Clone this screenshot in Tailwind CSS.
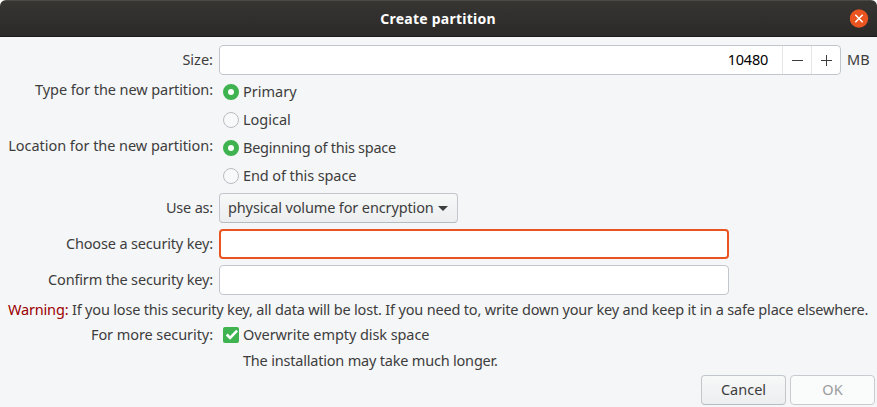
<!DOCTYPE html>
<html lang="en">
<head>
<meta charset="utf-8">
<title>Create partition</title>
<script src="https://cdn.jsdelivr.net/npm/@tailwindcss/browser@4"></script>
</head>
<body class="w-[877px] h-[407px] overflow-hidden bg-white font-['Noto_Sans','Open_Sans',sans-serif] text-[14.5px] leading-5 text-[#3d3d3d] whitespace-nowrap">
<div class="flex h-full flex-col rounded-t-[6px] overflow-hidden bg-[#f5f6f7]">
  <header class="grid h-[37px] shrink-0 grid-cols-[1fr_auto_1fr] items-center border-t border-b border-t-[#4b4a46] border-b-[#1d1c1b] bg-linear-to-b from-[#373532] to-[#2c2a29] pr-[8px]">
    <span></span>
    <h1 class="pl-[7px] text-[14px] font-bold text-white tracking-[0.24px]">Create partition</h1>
    <svg class="justify-self-end" width="19" height="19" viewBox="0 0 19 19"><circle cx="9" cy="9.5" r="9.2" fill="#e95420"/><path d="M5.3 5.8l7.4 7.4M12.7 5.8l-7.4 7.4" stroke="#fff" stroke-width="1.5"/></svg>
  </header>
  <main class="flex flex-col pt-2">
    <div class="flex h-[30px] items-center">
      <label class="w-[213px] pb-[2px] text-right">Size:</label>
      <div class="ml-[6px] flex h-[30px] w-[622px] items-center rounded-[4px] border border-[#c2c7cd] bg-white text-black">
        <div class="flex-1 pb-[2px] pr-[14px] text-right tracking-[-0.25px]">10480</div>
        <div class="flex h-full w-[29px] items-center justify-center border-l border-[#e4e6e9]"><svg width="11" height="11" viewBox="0 0 11 11"><path d="M0 5.5h11" stroke="#3d3d3d"/></svg></div>
        <div class="flex h-full w-[29px] items-center justify-center border-l border-[#e4e6e9]"><svg width="11" height="11" viewBox="0 0 11 11"><path d="M0 5.5h11M5.5 0v11" stroke="#3d3d3d"/></svg></div>
      </div>
      <span class="ml-[6px] pb-[2px]">MB</span>
    </div>
    <div class="mt-[3px] flex">
      <label class="mt-px w-[213px] text-right tracking-[-0.09px]">Type for the new partition:</label>
      <div class="ml-[10px]">
        <div class="flex h-7 items-center gap-1"><i class="h-4 w-4 rounded-full border-[5px] border-[#3eb34f] bg-white"></i><span class="pb-[2px]">Primary</span></div>
        <div class="flex h-7 items-center gap-1"><i class="h-4 w-4 rounded-full border border-[#b9bdc3] bg-[#f8f9fa]"></i><span class="pb-[2px]">Logical</span></div>
      </div>
    </div>
    <div class="flex">
      <label class="mt-px w-[213px] text-right tracking-[-0.05px]">Location for the new partition:</label>
      <div class="ml-[10px]">
        <div class="flex h-7 items-center gap-1"><i class="h-4 w-4 rounded-full border-[5px] border-[#3eb34f] bg-white"></i><span class="pb-[2px] tracking-[-0.26px]">Beginning of this space</span></div>
        <div class="flex h-7 items-center gap-1"><i class="h-4 w-4 rounded-full border border-[#b9bdc3] bg-[#f8f9fa]"></i><span class="pb-[2px] tracking-[-0.1px]">End of this space</span></div>
      </div>
    </div>
    <div class="mt-[3px] flex h-[30px] items-center">
      <label class="w-[213px] pb-[2px] text-right tracking-[-0.2px]">Use as:</label>
      <button class="ml-[6px] flex h-[30px] w-[239px] items-center justify-between rounded-[4px] border border-[#c2c7cd] border-b-[#b3bbc3] bg-linear-to-b from-[#f7f8f8] to-[#eceeef] pl-[8px] pr-[9px]"><span class="pb-[2px] tracking-[-0.13px]">physical volume for encryption</span><svg width="10" height="5" viewBox="0 0 10 5"><path d="M0 0h10L5 5z" fill="#3d3d3d"/></svg></button>
    </div>
    <div class="mt-[6px] flex h-[30px] items-center">
      <label class="w-[213px] pb-[2px] text-right tracking-[-0.16px]">Choose a security key:</label>
      <div class="ml-[6px] h-[30px] w-[510px] rounded-[4px] border-2 border-[#e95420] bg-white"></div>
    </div>
    <div class="mt-[6px] flex h-[30px] items-center">
      <label class="w-[213px] pb-[2px] text-right tracking-[-0.17px]">Confirm the security key:</label>
      <div class="ml-[6px] h-[30px] w-[510px] rounded-[4px] border border-[#c2c7cd] bg-white"></div>
    </div>
    <p class="mt-[4px] h-5 pl-[8px] tracking-[-0.18px]"><span class="text-[#9a0000]">Warning:</span> If you lose this security key, all data will be lost. If you need to, write down your key and keep it in a safe place elsewhere.</p>
    <div class="mt-[6px] flex h-5 items-center">
      <label class="w-[213px] pb-[2px] text-right tracking-[-0.07px]">For more security:</label>
      <svg class="ml-[10px] mr-1" width="16" height="16" viewBox="0 0 16 16"><rect width="16" height="16" rx="2" fill="#3eb34f"/><path d="M3.7 7.5l3.4 3.5 7-7.3" fill="none" stroke="#fff" stroke-width="2.6"/></svg>
      <span class="pb-[2px] tracking-[-0.08px]">Overwrite empty disk space</span>
    </div>
    <p class="mt-[5px] h-5 pl-[243px] tracking-[-0.2px]">The installation may take much longer.</p>
    <div class="mt-[5px] flex justify-end gap-1 pr-[2px]">
      <button class="h-[30px] w-[85px] rounded-[4px] border border-[#c2c7cd] border-b-[#b3bbc3] bg-linear-to-b from-[#f7f8f8] to-[#eceeef] pb-[2px]">Cancel</button>
      <button class="h-[30px] w-[85px] rounded-[4px] border border-[#c8ccd1] bg-[#fafbfb] pb-[2px] text-[#9b9d9f]">OK</button>
    </div>
  </main>
</div>
</body>
</html>
